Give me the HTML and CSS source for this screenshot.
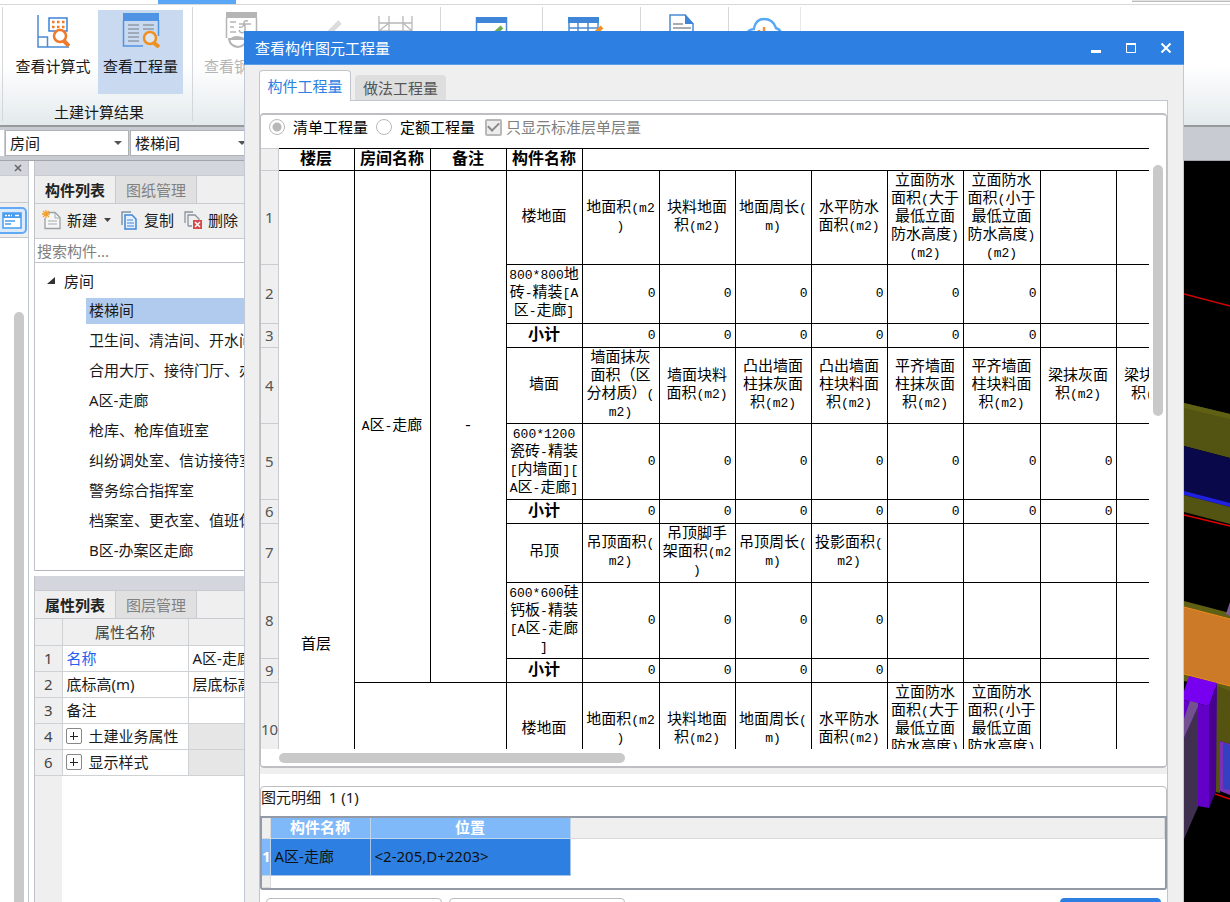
FILE: index.html
```html
<!DOCTYPE html>
<html lang="zh-CN">
<head>
<meta charset="utf-8">
<title>查看构件图元工程量</title>
<link rel="stylesheet" href="styles.css">
</head>
<body>
<div class="menubar"><span class="menu-active"></span><span class="menu-box"></span></div>

<header class="ribbon">
  <section class="group group-results">
    <div class="tools">
      <button class="tool" type="button">
        <svg width="34" height="34" viewBox="0 0 34 34" fill="none"><path d="M2 0V32H33M2 22H11.500V32" stroke="#4a8ad4" stroke-width="1.500"/><rect x="13" y="3" width="18" height="13" stroke="#3b82d8" stroke-width="1.500"/><path d="M16 7h2.500m2.500 0h2.500m2.500 0h2.500M16 12h2.500m2.500 0h2.500m2.500 0h2.500" stroke="#f07a2c" stroke-width="2.500"/><circle cx="24" cy="21" r="6" fill="#fff" stroke="#f07a2c" stroke-width="2.500"/><path d="M28 26l5 5" stroke="#f07a2c" stroke-width="4"/></svg>
        <span>查看计算式</span>
      </button>
      <button class="tool tool-on" type="button">
        <svg width="38" height="36" viewBox="0 0 38 36" fill="none"><path d="M1 1h36v8H1z" fill="#4f94e4"/><path d="M1.500 8V34H21M36.500 8V24" stroke="#4f94e4" stroke-width="1.500"/><path d="M6 13h11M6 17h11M6 21h11M6 25h11M6 29h11M21 13h11M21 17h11" stroke="#909aa8" stroke-width="1.500"/><circle cx="28" cy="26" r="6" fill="#dfe6f0" stroke="#f0901e" stroke-width="2.500"/><path d="M32 31l5 4" stroke="#f0901e" stroke-width="4"/></svg>
        <span>查看工程量</span>
      </button>
    </div>
    <div class="group-name">土建计算结果</div>
  </section>
  <section class="group group-rebar">
    <button class="tool tool-off" type="button">
      <svg width="34" height="36" viewBox="0 0 34 36" fill="none" stroke="#b5b5b5" stroke-width="1.500"><path d="M1 0h31v6H1z" fill="#b5b5b5" stroke="none"/><path d="M1.500 6V26M31.500 6V26M5 10h6M5 15h4M5 20h6M14 15q5 1 5-4 0-3 4-2M14 12h12M20 12v8q-5 2-6-2"/><path d="M4 27h17q0 7-8 8-8-1-9-8zM6 27q5-4 13 0" stroke-width="2"/></svg>
      <span>查看钢筋量</span>
    </button>
    <svg class="pencil-icon" width="38" height="34" viewBox="0 0 38 34" fill="none"><path d="M10 24L25 9" stroke="#dcdcdc" stroke-width="5"/></svg>
    <svg class="frame-icon" width="38" height="34" viewBox="0 0 38 34" fill="none" stroke="#b8b8b8" stroke-width="1.300"><path d="M3 1v30M13 1v30M27 1v30M36 1v30M3 8h33M3 16l10-8M13 16H3M13 16h14M36 16l-9-8M27 16h9"/></svg>
  </section>
  <section class="group group-icon"><svg width="34" height="34" viewBox="0 0 34 34" fill="none"><rect x="1.500" y="1" width="30" height="30" fill="#fff" stroke="#4a8ad4" stroke-width="1.500"/><path d="M1 0h31v6H1z" fill="#3f86d8"/><path d="M18 18L27 10" stroke="#6cab50" stroke-width="4"/></svg></section>
  <section class="group group-icon"><svg width="36" height="34" viewBox="0 0 36 34" fill="none"><path d="M1 0h31v6H1z" fill="#3f86d8"/><path d="M2 6v26M11 6v26M21 6v26M31 6v26M2 11h29M2 18h29" stroke="#4a8ad4" stroke-width="1.500"/><path d="M22 22L35 10" stroke="#f09020" stroke-width="4"/></svg></section>
  <section class="group group-icon group-page"><svg width="30" height="34" viewBox="0 0 30 34" fill="none"><path d="M2 33V2h15l8 9v22" stroke="#4a8ad4" stroke-width="1.500" fill="#fff"/><path d="M17 1l9 10h-9z" fill="#3f86d8"/><path d="M5 11h10M5 15h18" stroke="#8a919a" stroke-width="1.500"/><path d="M17 19.500h6" stroke="#f07a2c" stroke-width="3"/></svg></section>
  <section class="group group-cloud"><svg width="40" height="34" viewBox="0 0 40 34" fill="none"><path d="M10 11Q12 2 20 2q9 0 12 9 6 2 6 9M2 18q2-6 9-6M2 18q-2 10 7 10" stroke="#5aa8f5" stroke-width="2.500"/><path d="M15 13v12M20 10v15M25 14v12" stroke="#f58a3c" stroke-width="2.500"/></svg></section>
</header>

<div class="combobar">
  <span class="combo-end"></span>
  <label class="combo combo-type"><select aria-label="构件类型"><option>房间</option></select><svg width="8" height="5"><path d="M0 0h8L4 4z" fill="#555"/></svg></label>
  <label class="combo combo-item"><select aria-label="构件"><option>楼梯间</option></select><svg width="8" height="5"><path d="M0 0h8L4 4z" fill="#555"/></svg></label>
</div>

<main class="workspace">
  <aside class="rail">
    <div class="strip"><button class="rail-close" type="button" aria-label="关闭"><svg width="8" height="8" viewBox="0 0 8 8"><path d="M1 1l6 6M7 1L1 7" stroke="#666" stroke-width="1.500"/></svg></button></div>
    <div class="rail-head"></div>
    <div class="rail-tools"><button class="rail-button" type="button" aria-label="导航"><svg width="20" height="17" viewBox="0 0 20 17" fill="none"><rect x="1" y="1" width="18" height="15" fill="#fff" stroke="#4a9cf0" stroke-width="1.500"/><path d="M1 1h18v5H1z" fill="#4a9cf0"/><path d="M3 3.500h2m1 0h2m1 0h1m3 0h4" stroke="#fff" stroke-width="1.500"/><path d="M3 9h10M3 12h6" stroke="#4a9cf0" stroke-width="1.500"/></svg></button></div>
    <div class="rail-body"><span class="rail-thumb"></span></div>
  </aside>

  <div class="side">
    <section class="list-panel">
      <div class="strip"></div>
      <div class="tabs"><button class="tab tab-on" type="button">构件列表</button><button class="tab" type="button">图纸管理</button></div>
      <div class="toolbar">
        <button type="button"><svg width="19" height="20" viewBox="0 0 19 20" fill="none"><path d="M5 2.500h8l5 5v11H3V8" fill="#f6f6f6" stroke="#9aa0a6" stroke-width="1.300"/><path d="M13 3v5h5M6 11h9M6 14h9" stroke="#a6abb0"/><path d="M4 0v8M0 4h8M1 1l6 6M7 1L1 7" stroke="#f5a02c" stroke-width="1.300"/></svg>新建<svg class="caret" width="7" height="4"><path d="M0 0h7L3.500 4z" fill="#444"/></svg></button>
        <button type="button"><svg width="17" height="19" viewBox="0 0 17 19" fill="none"><path d="M1 14V1h9" stroke="#7f95ad" stroke-width="1.500"/><path d="M4 4h7l4 4v10H4z" fill="#e6f1fd" stroke="#3f86d8" stroke-width="1.500"/><path d="M6 9h6M6 12h7M6 15h7" stroke="#3f86d8"/></svg>复制</button>
        <button type="button"><svg width="18" height="19" viewBox="0 0 18 19" fill="none"><path d="M1 12V1h8M4 15V4h7l4 4v4M4 15h4" stroke="#8a949f" stroke-width="1.300"/><path d="M9 9h9v9H9z" fill="#d84848"/><path d="M11 11l5 5M16 11l-5 5" stroke="#fff" stroke-width="1.500"/></svg>删除</button>
      </div>
      <input class="search" type="text" placeholder="搜索构件..." aria-label="搜索构件">
      <div class="tree">
        <div class="tree-root"><svg width="9" height="8"><path d="M8 0v7H0z" fill="#333"/></svg>房间</div>
        <ul>
          <li><span class="selected">楼梯间</span></li>
          <li><span>卫生间、清洁间、开水间</span></li>
          <li><span>合用大厅、接待门厅、办公</span></li>
          <li><span>A区-走廊</span></li>
          <li><span>枪库、枪库值班室</span></li>
          <li><span>纠纷调处室、信访接待室</span></li>
          <li><span>警务综合指挥室</span></li>
          <li><span>档案室、更衣室、值班休息室</span></li>
          <li><span>B区-办案区走廊</span></li>
        </ul>
      </div>
    </section>

    <section class="props-panel">
      <div class="strip"></div>
      <div class="tabs"><button class="tab tab-on" type="button">属性列表</button><button class="tab" type="button">图层管理</button></div>
      <div class="props-body">
        <table class="props">
          <colgroup><col class="p-num"><col class="p-name"><col></colgroup>
          <tr><th></th><th>属性名称</th><th></th></tr>
          <tr><th>1</th><td class="link">名称</td><td>A区-走廊</td></tr>
          <tr><th>2</th><td>底标高(m)</td><td>层底标高</td></tr>
          <tr><th>3</th><td>备注</td><td></td></tr>
          <tr><th>4</th><td><button class="plus" type="button" aria-label="展开土建业务属性"></button>土建业务属性</td><td class="blank"></td></tr>
          <tr><th>6</th><td><button class="plus" type="button" aria-label="展开显示样式"></button>显示样式</td><td class="blank"></td></tr>
        </table>
      </div>
    </section>
  </div>

  <div class="canvas">
    <svg width="46" height="742" viewBox="1184 160 46 742">
      <path d="M1184 293L1230 305" stroke="#d00000" stroke-width="1.500"/>
      <path d="M1184 402L1230 413V457L1184 445z" fill="#545412"/>
      <path d="M1184 402L1230 413V418L1184 407z" fill="#606014"/>
      <path d="M1184 445L1230 457V503L1184 491z" fill="#08084a"/>
      <path d="M1184 490L1230 502V506L1184 494z" fill="#2020e0"/>
      <path d="M1184 494L1230 506V523L1184 511z" fill="#545412"/>
      <path d="M1184 514L1230 525" stroke="#e00000" stroke-width="1.500"/>
      <path d="M1184 600L1230 612V691L1184 680z" fill="#606014"/>
      <path d="M1230 601L1226 613L1230 615z" fill="#7a5a98"/>
      <path d="M1184 606L1230 618V685L1184 673z" fill="#cc7a28"/>
      <path d="M1184 606L1230 618M1184 673L1230 685" stroke="#f08a20"/>
      <path d="M1216 684L1230 690V743L1220 740V792L1216 791z" fill="#545410"/>
      <path d="M1220 740L1230 743V794L1220 790z" fill="#7a30b8"/>
      <path d="M1223 742L1230 744V789L1223 788z" fill="#3440c0"/>
      <path d="M1189 675L1217 682L1209 705L1184 699V690z" fill="#7800f0"/>
      <path d="M1184 699L1209 705V807L1198 805V760H1184z" fill="#6200c8"/>
      <path d="M1217 682L1209 705V807L1216 790z" fill="#480090"/>
      <path d="M1184 718L1190 700L1198 702V706L1184 737z" fill="#735090"/>
      <path d="M1184 737L1198 706V806L1184 838z" fill="#403050"/>
      <path d="M1215 793L1230 798" stroke="#e00000" stroke-width="1.500"/>
    </svg>
  </div>
</main>

<section class="dialog" role="dialog" aria-label="查看构件图元工程量">
  <div class="titlebar">
    <span>查看构件图元工程量</span>
    <div class="win-buttons">
      <button type="button" aria-label="最小化"><svg width="12" height="12"><path d="M1 8h10v3H1z" fill="#fff"/></svg></button>
      <button type="button" aria-label="最大化"><svg width="12" height="12" fill="none"><path d="M1.500 1.500h9v9h-9z" stroke="#fff"/><path d="M1 2h10" stroke="#fff" stroke-width="2"/></svg></button>
      <button type="button" aria-label="关闭窗口"><svg width="12" height="12"><path d="M1.500 1.500l9 9M10.500 1.500l-9 9" stroke="#fff" stroke-width="2"/></svg></button>
    </div>
  </div>
  <div class="dlg-body">
    <div class="dlg-tabs"><button class="dlg-tab dlg-tab-on" type="button">构件工程量</button><button class="dlg-tab" type="button">做法工程量</button></div>
    <div class="dlg-panel">
      <div class="quantity-box">
        <div class="options">
          <label><input class="radio" type="radio" name="kind" checked>清单工程量</label>
          <label><input class="radio" type="radio" name="kind">定额工程量</label>
          <label class="muted"><input class="check" type="checkbox" checked disabled>只显示标准层单层量</label>
        </div>
        <div class="grid-area">
          <div class="grid-view">
            <table class="grid">
              <colgroup><col class="g-num"><col class="g"><col class="g"><col class="g"><col class="g"><col class="g-wide"><col class="g"><col class="g"><col class="g"><col class="g"><col class="g-wide"><col class="g"><col class="g"></colgroup>
              <tr class="h-head"><th class="n"></th><th>楼层</th><th>房间名称</th><th>备注</th><th>构件名称</th><th colspan="8"></th></tr>
              <tr class="h-xl"><th class="n">1</th><td class="floor" rowspan="11">首层</td><td rowspan="9"><small>A</small>区<small>-</small>走廊</td><td rowspan="9">-</td><td>楼地面</td><td>地面积<small>(m2<br>)</small></td><td>块料地面<br>积<small>(m2)</small></td><td>地面周长<small>(<br>m)</small></td><td>水平防水<br>面积<small>(m2)</small></td><td>立面防水<br>面积<small>(</small>大于<br>最低立面<br>防水高度<small>)<br>(m2)</small></td><td>立面防水<br>面积<small>(</small>小于<br>最低立面<br>防水高度<small>)<br>(m2)</small></td><td></td><td></td></tr>
              <tr class="h-m"><th class="n">2</th><td><small>800*800</small>地<br>砖<small>-</small>精装<small>[A</small><br>区<small>-</small>走廊<small>]</small></td><td class="v">0</td><td class="v">0</td><td class="v">0</td><td class="v">0</td><td class="v">0</td><td class="v">0</td><td></td><td></td></tr>
              <tr class="h-s"><th class="n">3</th><th>小计</th><td class="v">0</td><td class="v">0</td><td class="v">0</td><td class="v">0</td><td class="v">0</td><td class="v">0</td><td></td><td></td></tr>
              <tr class="h-l"><th class="n">4</th><td>墙面</td><td>墙面抹灰<br>面积（区<br>分材质）<small>(<br>m2)</small></td><td>墙面块料<br>面积<small>(m2)</small></td><td>凸出墙面<br>柱抹灰面<br>积<small>(m2)</small></td><td>凸出墙面<br>柱块料面<br>积<small>(m2)</small></td><td>平齐墙面<br>柱抹灰面<br>积<small>(m2)</small></td><td>平齐墙面<br>柱块料面<br>积<small>(m2)</small></td><td>梁抹灰面<br>积<small>(m2)</small></td><td>梁块料面<br>积<small>(m2)</small></td></tr>
              <tr class="h-l"><th class="n">5</th><td><small>600*1200</small><br>瓷砖<small>-</small>精装<br><small>[</small>内墙面<small>][</small><br><small>A</small>区<small>-</small>走廊<small>]</small></td><td class="v">0</td><td class="v">0</td><td class="v">0</td><td class="v">0</td><td class="v">0</td><td class="v">0</td><td class="v">0</td><td></td></tr>
              <tr class="h-s"><th class="n">6</th><th>小计</th><td class="v">0</td><td class="v">0</td><td class="v">0</td><td class="v">0</td><td class="v">0</td><td class="v">0</td><td class="v">0</td><td></td></tr>
              <tr class="h-m"><th class="n">7</th><td>吊顶</td><td>吊顶面积<small>(<br>m2)</small></td><td>吊顶脚手<br>架面积<small>(m2<br>)</small></td><td>吊顶周长<small>(<br>m)</small></td><td>投影面积<small>(<br>m2)</small></td><td></td><td></td><td></td><td></td></tr>
              <tr class="h-l"><th class="n">8</th><td><small>600*600</small>硅<br>钙板<small>-</small>精装<br><small>[A</small>区<small>-</small>走廊<br><small>]</small></td><td class="v">0</td><td class="v">0</td><td class="v">0</td><td class="v">0</td><td></td><td></td><td></td><td></td></tr>
              <tr class="h-s"><th class="n">9</th><th>小计</th><td class="v">0</td><td class="v">0</td><td class="v">0</td><td class="v">0</td><td></td><td></td><td></td><td></td></tr>
              <tr class="h-xl"><th class="n">10</th><td rowspan="2" colspan="2"></td><td>楼地面</td><td>地面积<small>(m2<br>)</small></td><td>块料地面<br>积<small>(m2)</small></td><td>地面周长<small>(<br>m)</small></td><td>水平防水<br>面积<small>(m2)</small></td><td>立面防水<br>面积<small>(</small>大于<br>最低立面<br>防水高度<small>)<br>(m2)</small></td><td>立面防水<br>面积<small>(</small>小于<br>最低立面<br>防水高度<small>)<br>(m2)</small></td><td></td><td></td></tr>
              <tr class="h-rest"><th class="n"></th><td></td><td></td><td></td><td></td><td></td><td></td><td></td><td></td><td></td></tr>
            </table>
          </div>
          <div class="v-track"><span></span></div>
        </div>
        <div class="h-track"><span></span></div>
      </div>
      <div class="splitter"></div>
      <div class="detail-box">
        <h2>图元明细&nbsp; 1 (1)</h2>
        <div class="detail-view">
          <table class="detail">
            <colgroup><col class="d-num"><col class="d-name"><col class="d-pos"><col></colgroup>
            <tr class="d-head"><th></th><th class="hl">构件名称</th><th class="hl">位置</th><th></th></tr>
            <tr class="d-row"><th class="hl">1</th><td>A区-走廊</td><td>&lt;2-205,D+2203&gt;</td><td class="none"></td></tr>
            <tr class="d-tail"><th></th><td class="none" colspan="3"></td></tr>
          </table>
        </div>
      </div>
      <div class="actions"><button type="button" aria-label="设置分类及工程量"></button><button type="button" aria-label="导出"></button><button class="primary" type="button" aria-label="退出"></button></div>
    </div>
  </div>
</section>
</body>
</html>
```

FILE: styles.css
```css
* { box-sizing: border-box; }
html, body { height: 100%; }
body {
  margin: 0;
  display: flex;
  flex-direction: column;
  overflow: hidden;
  position: relative;
  background: #fff;
  color: #1a1a1a;
  font: 15px/20px "Noto Sans", "Noto Sans CJK SC", sans-serif;
}
button, input, select { font: inherit; color: inherit; }
button { margin: 0; padding: 0; border: 0; background: none; }
svg { display: block; flex: none; }
table { border-collapse: collapse; table-layout: fixed; }

/* menu strip */
.menubar { flex: none; display: flex; height: 5px; padding: 0 0 1px 158px; border-bottom: 1px solid #d8d8d8; }
.menu-active { width: 78px; height: 4px; background: #5aa7f7; }
.menu-box { width: 98px; height: 2px; margin-left: auto; background: #e4e4e4; border-bottom: 1px solid #bbb; }

/* ribbon */
.ribbon {
  flex: none; display: flex; height: 122px; padding: 2px 0 4px 2px;
  background: linear-gradient(#fff 50%, #e3eaec);
  border-bottom: 2px solid #97999c;
}
.group { flex: none; border-left: 1px solid #d4d7d9; }
.group-results { width: 190px; padding: 3px 0 0 5px; }
.tools { display: flex; }
.tool { display: flex; flex-direction: column; align-items: center; gap: 7px; width: 90px; height: 84px; padding-top: 5px; white-space: nowrap; }
.tool-on { width: 85px; background: #c8d9f0; padding-top: 2px; gap: 8px; }
.tool-off { color: #b5b5b5; width: 97px; padding-top: 2px; gap: 8px; }
.group-name { margin-top: 8px; text-align: center; }
.group-results .group-name { padding-right: 2px; }
.group-rebar { display: flex; width: 248px; padding: 3px 0 0; }
.pencil-icon { margin-left: 25px; margin-top: 3px; }
.frame-icon { margin-left: 23px; margin-top: 5px; }
.group-icon { width: 102px; padding: 10px 0 0 34px; }
.group-icon + .group-icon { width: 98px; padding-left: 24px; }
.group-page.group-icon { width: 88px; padding: 6px 0 0 27px; }
.group-cloud { width: 73px; padding: 10px 0 0 15px; border-right: 1px solid #e6e8e9; }

/* selectors under the ribbon */
.combobar { flex: none; display: flex; gap: 1px; height: 34px; padding: 3px 0 4px; background: #c8cbd1; border-bottom: 1px solid #a2a5aa; }
.combo-end { width: 4px; background: #fff; }
.combo { display: flex; align-items: center; background: #fff; border: 1px solid #aeb1b5; padding-right: 6px; }
.combo select { flex: 1; min-width: 0; appearance: none; border: 0; background: none; padding: 0 4px; }
.combo-type { width: 124px; }
.combo-item { width: 123px; }

/* workspace */
.workspace { flex: 1; min-height: 0; display: flex; }
.strip { flex: none; height: 15px; background: #d3d6dc; border-bottom: 1px solid #c8cbd0; }
.rail { flex: none; display: flex; flex-direction: column; width: 29px; border-right: 1px solid #c0c6d0; }
.rail .strip { display: flex; align-items: center; justify-content: flex-end; padding-right: 6px; }
.rail-close { display: block; }
.rail-head { height: 27px; background: #efefef; border-bottom: 1px solid #c4c8cc; }
.rail-tools { height: 35px; padding: 4px 2px 3px 0; background: #efefef; border-bottom: 1px solid #c4c8cc; }
.rail-button { display: flex; align-items: center; width: 27px; height: 27px; padding-left: 2px; border: 2px solid #62aaf5; border-left: 0; border-radius: 0 5px 5px 0; background: #dcebfb; }
.rail-body { flex: 1; display: flex; padding: 74px 4px 0 14px; }
.rail-thumb { flex: 1; border-radius: 5px 5px 0 0; background: #c9c9c9; }

.side { flex: none; display: flex; flex-direction: column; gap: 5px; width: 215px; padding-left: 5px; overflow: hidden; }
.list-panel, .props-panel { display: flex; flex-direction: column; border-left: 1px solid #c0c4c8; }
.props-panel { flex: 1; min-height: 0; }
.tabs { flex: none; display: flex; height: 28px; background: #efefef; border-bottom: 1px solid #c8ccd0; }
.tab { width: 81px; background: #e0e0e0; color: #808080; border-right: 1px solid #c8ccd0; }
.tab-on { background: #efefef; color: #222; font-weight: 600; }
.toolbar { display: flex; gap: 10px; height: 35px; padding: 0 0 2px 7px; background: #efefef; border-bottom: 1px solid #c8ccd0; }
.toolbar button { display: flex; align-items: center; gap: 6px; white-space: nowrap; }
.toolbar .caret { margin-left: 1px; }
.search { width: 100%; height: 24px; border: 0; border-bottom: 1px solid #c0c4c8; padding: 0 2px; background: #fff; }
.search::placeholder { color: #808080; opacity: 1; }
.tree { height: 308px; padding-top: 3px; border-bottom: 1px solid #b4b8bc; white-space: nowrap; }
.tree-root { display: flex; align-items: center; gap: 8px; height: 30px; padding-left: 12px; }
.tree ul { list-style: none; margin: 0; padding: 0 0 0 51px; }
.tree li { display: flex; align-items: center; height: 30px; }
.tree li span { flex: 1; line-height: 24px; padding: 0 0 2px 3px; }
.tree .selected { background: #b0cbed; }

.props-body { flex: 1; background: linear-gradient(90deg, #efefef 27px, #fff 27px); }
.props { width: 240px; }
.p-num { width: 27px; }
.p-name { width: 126px; }
.props tr { height: 26px; }
.props th, .props td { padding: 0 0 0 4px; border: 1px solid #cfd2d5; border-left: 0; border-top: 0; white-space: nowrap; overflow: hidden; text-align: left; background: #fff; }
.props th { padding: 0; text-align: center; font-weight: 400; color: #444; background: #efefef; }
.props .link { color: #2460f0; }
.props .blank { background: #e6e6e6; }
.plus { display: inline-block; width: 16px; height: 16px; margin: 0 7px 0 -1px; vertical-align: -1px; border: 1px solid #888; border-radius: 2px;
  background: linear-gradient(#222, #222) center / 8px 1px no-repeat, linear-gradient(#222, #222) center / 1px 8px no-repeat; }

.canvas { flex: 1; display: flex; justify-content: flex-end; background: #000; overflow: hidden; }

/* dialog window */
.dialog { position: absolute; left: 244px; right: 46px; top: 31px; bottom: -30px; display: flex; flex-direction: column; background: #efefef; border: 1px solid #c2c9d4; border-top: 0; }
.titlebar { flex: none; display: flex; align-items: center; justify-content: space-between; height: 34px; margin: 0 -1px; padding: 0 12px 0 11px; background: #2d80e2; border-bottom: 1px solid #5a9de9; color: #fff; }
.win-buttons { display: flex; gap: 23px; }
.dlg-body { flex: 1; display: flex; flex-direction: column; padding: 5px 15px 0 14px; }
.dlg-tabs { display: flex; align-items: flex-end; gap: 4px; height: 31px; }
.dlg-tab { width: 91px; height: 26px; border-radius: 4px 4px 0 0; background: #dedede; color: #555; border-bottom: 1px solid #c0c6cc; }
.dlg-tab-on { width: 92px; height: 31px; background: #fff; color: #2d80e2; border: 1px solid #c0c6cc; border-bottom: 0; z-index: 1; }
.dlg-panel { flex: 1; display: flex; flex-direction: column; margin-top: -1px; padding-top: 12px; background: #fff; border: 1px solid #c0c6cc; border-bottom: 0; }
.quantity-box { display: flex; flex-direction: column; height: 655px; border: 1px solid #bdbfc2; border-top-width: 2px; border-bottom-width: 2px; border-radius: 4px; }
.options { display: flex; align-items: center; height: 33px; padding: 0 0 9px 8px; gap: 8px; color: #000; }
.options label { display: flex; align-items: center; gap: 8px; }
.options .muted { color: #808080; gap: 4px; margin-left: 2px; }
.radio, .check { appearance: none; flex: none; width: 16px; height: 16px; margin: 0; border: 1px solid #b8b8b8; background: #fff; }
.radio { border-radius: 8px; }
.radio:checked { background: radial-gradient(#b8b8b8 4px, #fff 5px); }
.check { width: 17px; height: 17px; border: 2px solid #b8b8b8; border-radius: 2px; background: #ededed; display: grid; place-items: center; }
.check::before { content: ""; width: 9px; height: 5px; margin-top: -3px; border: solid #888; border-width: 0 0 2px 2px; rotate: -45deg; }

.grid-area { flex: 1; min-height: 0; display: flex; }
.grid-view { flex: 1; min-width: 0; overflow: hidden; }
.v-track { flex: none; width: 17px; padding: 17px 3px 0 4px; }
.v-track span { display: block; height: 251px; border-radius: 5px; background: #c9c9c9; }
.h-track { height: 17px; padding: 4px 0 3px 18px; }
.h-track span { display: block; width: 346px; height: 10px; border-radius: 5px; background: #c9c9c9; }

.grid { width: 931px; color: #000; line-height: 18px; }
.g-num { width: 17px; }
.g { width: 76px; }
.g-wide { width: 77px; }
.grid th, .grid td { padding: 0; border: 1px solid #000; text-align: center; vertical-align: middle; white-space: nowrap; font-family: "Liberation Mono", "Noto Sans CJK SC", monospace; overflow: hidden; }
.grid th { font-size: 16px; font-weight: 700; }
.grid .floor { border-left-color: #c8ccd0; }
.grid .n { font: 15px/18px "Noto Sans", sans-serif; color: #555; background: #efefef; border-color: #c8ccd0; border-left: 0; padding-bottom: 2px; }
.grid small { font-size: 13px; }
.grid .v { text-align: right; padding-right: 3px; font-size: 13px; }
.h-head { height: 22px; }
.h-s { height: 24px; }
.h-m { height: 59px; }
.h-l { height: 76px; }
.h-xl { height: 94px; }
.h-rest { height: 344px; }

.splitter { flex: none; height: 6px; background: #efefef; }
.detail-box { margin-top: 12px; height: 104px; border: 1px solid #bdbfc2; border-radius: 4px; display: flex; flex-direction: column; }
.detail-box h2 { margin: 0; height: 29px; font: inherit; }
.detail-view { flex: 1; min-height: 0; border: 2px solid #939aa5; border-radius: 0 0 3px 3px; margin: 0 -1px -1px; overflow: hidden; }
.detail { width: 100%; line-height: 18px; }
.d-num { width: 8px; }
.d-name { width: 100px; }
.d-pos { width: 200px; }
.d-head { height: 20px; }
.d-row { height: 37px; }
.d-tail { height: 12px; }
.detail th { padding: 0 0 1px; background: #efefef; border: 1px solid #dadada; border-top: 0; border-left: 0; font-weight: 700; }
.detail .hl { background: #80b9fa; color: #fff; border-color: #c0d4ea; }
.detail td { padding: 0 0 2px 4px; background: #2d80e2; color: #111; border: 1px solid #a8c4e6; border-top: 0; }
.detail .none { background: #fff; border: 0; padding: 0; }
.actions { display: flex; gap: 7px; padding: 8px 6px 0; }
.actions button { width: 176px; height: 30px; border: 1px solid #b8bcc0; border-radius: 4px; background: #fff; }
.actions .primary { width: 101px; margin-left: auto; background: #2d80e2; border-color: #2d80e2; }
```
